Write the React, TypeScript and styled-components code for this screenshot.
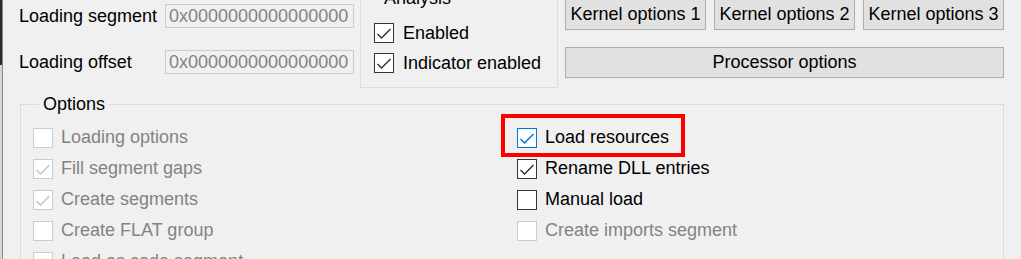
import React, { FC } from 'react';
import styled, { createGlobalStyle } from 'styled-components';

const GlobalStyle = createGlobalStyle`
  html, body {
    margin: 0;
    padding: 0;
    background: #f0f0f0;
    overflow: hidden;
  }
  body {
    font-family: "Liberation Sans", Arial, sans-serif;
    font-size: 18px;
    color: #000;
  }
`;

const Window = styled.div`
  display: flex;
  width: 1021px;
  height: 259px;
  overflow: hidden;
`;

const BehindStrip = styled.div`
  width: 2px;
  flex: none;
  background: linear-gradient(#2b2b2b 0, #2b2b2b 65px, #d6d6d6 65px);
  border-right: 1px solid #8a8a8a;
`;

const Main = styled.div`
  flex: 1;
  padding: 0 17px 0 16px;
`;

const TopSection = styled.div`
  display: flex;
  align-items: flex-start;
  margin-top: -12px;
`;

const Fields = styled.div`
  width: 335px;
  margin-right: 6px;
  padding-top: 16px;
  display: flex;
  flex-direction: column;
  gap: 22px;
`;

const FieldRow = styled.div`
  display: flex;
  align-items: center;
  height: 24px;
`;

const FieldLabel = styled.span`
  width: 146px;
  white-space: nowrap;
`;

const HexInput = styled.input`
  width: 189px;
  height: 24px;
  box-sizing: border-box;
  padding: 0 0 0 3px;
  border: 1px solid #cccccc;
  background: #f0f0f0;
  color: #838383;
  font-family: inherit;
  font-size: 18px;
  outline: none;
`;

const Group = styled.fieldset<{ $width?: number }>`
  margin: 0;
  min-width: 0;
  border: 1px solid #dcdcdc;
  ${(p) => (p.$width ? `width: ${p.$width}px;` : '')}
  box-sizing: border-box;
`;

const AnalysisGroup = styled(Group)`
  padding: 10px 0 9px 13px;
  margin-right: 7px;
`;

const OptionsGroup = styled(Group)`
  margin: 6px 0 0 1px;
  padding: 8px 0 0 12px;
  height: 200px;
`;

const GroupTitle = styled.legend`
  margin-left: 6px;
  padding: 0 4px;
  line-height: 20px;
  font-size: 18px;
`;

const Buttons = styled.div`
  width: 439px;
  margin-top: 11px;
  display: flex;
  flex-direction: column;
  gap: 17px;
`;

const ButtonRow = styled.div`
  display: flex;
  gap: 8px;
`;

const Button = styled.button<{ $wide?: boolean }>`
  flex: ${(p) => (p.$wide ? 'none' : '1 1 0')};
  height: 31px;
  padding: 0;
  border: 1px solid #adadad;
  background: #e1e1e1;
  color: #000;
  font-family: inherit;
  font-size: 18px;
  white-space: nowrap;
`;

const OptionGrid = styled.div`
  display: grid;
  grid-template-columns: 484px 1fr;
  grid-auto-flow: column;
  grid-template-rows: repeat(5, 31px);
`;

const CheckRow = styled.label<{ $disabled?: boolean; $gap?: number; $h?: number }>`
  position: relative;
  display: flex;
  align-items: center;
  height: ${(p) => p.$h ?? 31}px;
  gap: ${(p) => p.$gap ?? 8}px;
  color: ${(p) => (p.$disabled ? '#838383' : '#000')};
  white-space: nowrap;
`;

const Box = styled.span<{ $tone: 'normal' | 'disabled' | 'focus' }>`
  width: 20px;
  height: 20px;
  box-sizing: border-box;
  flex: none;
  background: #fff;
  border: 1px solid
    ${(p) => (p.$tone === 'focus' ? '#0078d7' : p.$tone === 'disabled' ? '#cccccc' : '#333333')};
  display: flex;
  align-items: center;
  justify-content: center;
`;

const Highlight = styled.span`
  position: absolute;
  left: -16px;
  top: -8px;
  width: 184px;
  height: 43px;
  box-sizing: border-box;
  border: 4px solid #ff0000;
  pointer-events: none;
`;

type Tone = 'normal' | 'disabled' | 'focus';

const tickColor: Record<Tone, string> = {
  normal: '#333333',
  disabled: '#c4c4c4',
  focus: '#0078d7',
};

interface CheckProps {
  label: string;
  checked?: boolean;
  tone?: Tone;
  gap?: number;
  h?: number;
  marked?: boolean;
}

const Check: FC<CheckProps> = ({ label, checked, tone = 'normal', gap, h, marked }) => (
  <CheckRow $disabled={tone === 'disabled'} $gap={gap} $h={h}>
    <Box $tone={tone}>
      {checked && (
        <svg width="18" height="18" viewBox="1 1 18 18">
          <polyline
            points="3.5,11 7.5,15 16.5,6"
            fill="none"
            stroke={tickColor[tone]}
            strokeWidth="1.5"
          />
        </svg>
      )}
    </Box>
    <span>{label}</span>
    {marked && <Highlight />}
  </CheckRow>
);

export default function App() {
  return (
    <Window>
      <GlobalStyle />
      <BehindStrip />
      <Main>
        <TopSection>
          <Fields>
            <FieldRow>
              <FieldLabel>Loading segment</FieldLabel>
              <HexInput disabled value="0x0000000000000000" readOnly />
            </FieldRow>
            <FieldRow>
              <FieldLabel>Loading offset</FieldLabel>
              <HexInput disabled value="0x0000000000000000" readOnly />
            </FieldRow>
          </Fields>
          <AnalysisGroup $width={198}>
            <GroupTitle>Analysis</GroupTitle>
            <Check label="Enabled" checked h={30} gap={9} />
            <Check label="Indicator enabled" checked h={30} gap={9} />
          </AnalysisGroup>
          <Buttons>
            <ButtonRow>
              <Button>Kernel options 1</Button>
              <Button>Kernel options 2</Button>
              <Button>Kernel options 3</Button>
            </ButtonRow>
            <Button $wide>Processor options</Button>
          </Buttons>
        </TopSection>
        <OptionsGroup>
          <GroupTitle>Options</GroupTitle>
          <OptionGrid>
            <Check label="Loading options" tone="disabled" />
            <Check label="Fill segment gaps" tone="disabled" checked />
            <Check label="Create segments" tone="disabled" checked />
            <Check label="Create FLAT group" tone="disabled" />
            <Check label="Load as code segment" tone="disabled" />
            <Check label="Load resources" tone="focus" checked marked />
            <Check label="Rename DLL entries" checked />
            <Check label="Manual load" />
            <Check label="Create imports segment" tone="disabled" />
          </OptionGrid>
        </OptionsGroup>
      </Main>
    </Window>
  );
}
